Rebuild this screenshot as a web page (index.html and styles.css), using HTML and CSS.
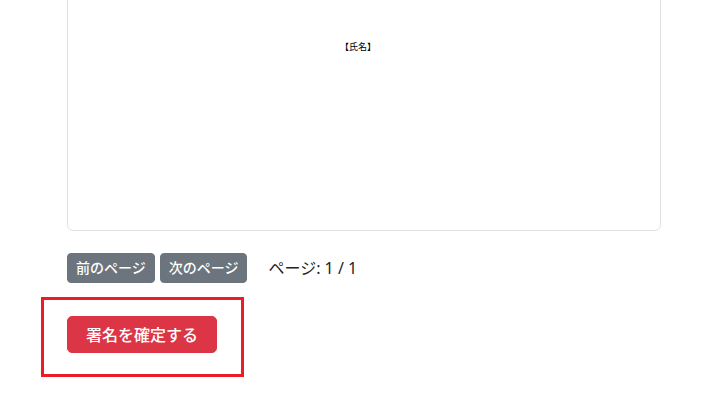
FILE: index.html
```html
<!DOCTYPE html>
<html lang="ja">
<head>
<meta charset="utf-8">
<link rel="stylesheet" href="styles.css">
</head>
<body>
<div class="page">
  <div class="viewer">
    <div class="pdf-page">
      <div class="pdf-text">【氏名】</div>
    </div>
  </div>
  <div class="pager">
    <button class="btn btn-sm btn-secondary">前のページ</button>
    <button class="btn btn-sm btn-secondary">次のページ</button>
    <span class="page-info">ページ: 1 / 1</span>
  </div>
  <div class="confirm-box">
    <button class="btn btn-danger">署名を確定する</button>
  </div>
</div>
</body>
</html>
```
FILE: styles.css
```css
* { box-sizing: border-box; }
html, body { margin: 0; padding: 0; background: #fff; }
body {
  font-family: "Noto Sans", "Noto Sans CJK JP", sans-serif;
  color: #212529;
  font-size: 16px;
  line-height: 1.5;
}
.page {
  padding-left: 67px;
  width: 661px;
}
.viewer {
  margin-top: -10px;
  height: 241px;
  border: 1px solid #dee2e6;
  border-radius: 6px;
  background: #fff;
}
.pdf-page {
  padding-top: 50px;
  display: flex;
  justify-content: center;
}
.pdf-text {
  font-family: "Liberation Serif", "Noto Sans CJK JP", serif;
  font-size: 9px;
  line-height: 12px;
  margin-right: 12px;
  color: #000;
}
.pager {
  margin-top: 22px;
  display: flex;
  align-items: center;
  gap: 5px;
  height: 30px;
}
.btn {
  font-family: "Noto Sans", "Noto Sans CJK JP", sans-serif;
  font-weight: 500;
  color: #fff;
  border: 1px solid transparent;
  cursor: pointer;
}
.btn-sm {
  font-size: 14px;
  line-height: 20px;
  padding: 4px 8px;
  border-radius: 4px;
  height: 30px;
}
.btn-secondary { background: #6c757d; border-color: #6c757d; }
.page-info {
  margin-left: 16px;
  font-size: 16px;
  color: #212529;
}
.confirm-box {
  margin-top: 14px;
  margin-left: -26px;
  width: fit-content;
  border: 3px solid #ed1c24;
  padding: 16px 24px 21px 23px;
}
.btn-danger {
  background: #dc3545;
  border-color: #dc3545;
  font-size: 16px;
  line-height: 24px;
  padding: 6px 18px;
  border-radius: 5px;
  height: 37px;
}
```
